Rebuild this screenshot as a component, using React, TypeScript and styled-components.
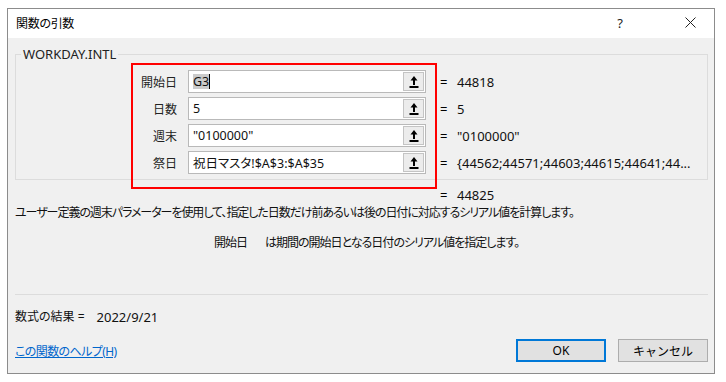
import styled, { createGlobalStyle } from 'styled-components';

const GlobalStyle = createGlobalStyle`
  body {
    margin: 0;
    background: #fff;
    font-family: 'Noto Sans', 'Noto Sans CJK JP', sans-serif;
    font-size: 12px;
    color: #000;
    font-feature-settings: 'palt';
  }
`;

const args = [
  { label: '開始日', value: 'G3', result: '44818', selected: true },
  { label: '日数', value: '5', result: '5' },
  { label: '週末', value: '"0100000"', result: '"0100000"' },
  { label: '祭日', value: '祝日マスタ!$A$3:$A$35', result: '{44562;44571;44603;44615;44641;44...' },
];

const RefIcon = () => (
  <svg width="10" height="14" viewBox="0 0 10 14">
    <path d="M5 1 L8.5 5.5 L6 5.5 L6 10 L4 10 L4 5.5 L1.5 5.5 Z" fill="#000" />
    <rect x="0.5" y="11" width="9" height="2" fill="#000" />
  </svg>
);

const CloseIcon = () => (
  <svg width="11" height="11" viewBox="0 0 11 11">
    <path d="M0.5 0.5 L10.5 10.5 M10.5 0.5 L0.5 10.5" stroke="#222" strokeWidth="1" />
  </svg>
);

const App = () => {
  return (
    <>
      <GlobalStyle />
      <Window>
        <TitleBar>
          <Title>関数の引数</Title>
          <TitleButtons>
            <TitleButton>?</TitleButton>
            <TitleButton>
              <CloseIcon />
            </TitleButton>
          </TitleButtons>
        </TitleBar>

        <Body>
          <GroupBox>
            <Legend>WORKDAY.INTL</Legend>
            {args.map((a) => (
              <ArgRow key={a.label}>
                <ArgLabel>{a.label}</ArgLabel>
                <InputBox>
                  <InputText>
                    {a.selected ? (
                      <>
                        <Selected>{a.value}</Selected>
                        <Caret />
                      </>
                    ) : (
                      a.value
                    )}
                  </InputText>
                  <RefButton>
                    <RefIcon />
                  </RefButton>
                </InputBox>
                <Equals>=</Equals>
                <ArgValue>{a.result}</ArgValue>
              </ArgRow>
            ))}
          </GroupBox>

          <ResultLine>
            <Equals>=</Equals>
            <ArgValue>44825</ArgValue>
          </ResultLine>

          <Description>
            ユーザー定義の週末パラメーターを使用して、指定した日数だけ前あるいは後の日付に対応するシリアル値を計算します。
          </Description>

          <ArgHelp>
            <span>開始日</span>
            <span>は期間の開始日となる日付のシリアル値を指定します。</span>
          </ArgHelp>

          <Separator />

          <FormulaResult>
            <span>数式の結果 =</span>
            <ResultValue>2022/9/21</ResultValue>
          </FormulaResult>

          <Footer>
            <HelpLink href="#">この関数のヘルプ(H)</HelpLink>
            <Buttons>
              <DialogButton $primary>OK</DialogButton>
              <DialogButton>キャンセル</DialogButton>
            </Buttons>
          </Footer>
        </Body>

        <Highlight />
      </Window>
    </>
  );
};

export default App;

const Window = styled.div`
  position: relative;
  box-sizing: border-box;
  width: 708px;
  height: 366px;
  margin: 8px 0 0 7px;
  border: 1px solid #8c8c8c;
  display: flex;
  flex-direction: column;
`;

const TitleBar = styled.div`
  height: 29px;
  display: flex;
  align-items: center;
  justify-content: space-between;
  padding-left: 8px;
  background: #fff;
`;

const Title = styled.span`
  font-size: 12px;
  margin-top: -2px;
  letter-spacing: -0.3px;
`;

const TitleButtons = styled.div`
  display: flex;
  gap: 22px;
  align-self: stretch;
`;

const TitleButton = styled.span`
  width: 48px;
  display: flex;
  align-items: center;
  justify-content: center;
  font-size: 13px;
  color: #222;
  margin-top: -2px;
`;

const Body = styled.div`
  flex: 1;
  background: #f0f0f0;
  padding: 0 6px 0 7px;
  display: flex;
  flex-direction: column;
`;

const GroupBox = styled.fieldset`
  margin: 8px 0 0;
  padding: 8px 0 5px;
  border: 1px solid #dcdcdc;
  display: flex;
  flex-direction: column;
  gap: 4px;
  min-width: 0;
`;

const Legend = styled.legend`
  margin-left: 5px;
  padding: 0 2px;
  line-height: 16px;
  font-size: 13px;
  color: #222;
`;

const ArgRow = styled.div`
  display: flex;
  align-items: center;
  height: 23px;
`;

const ArgLabel = styled.span`
  width: 161px;
  text-align: right;
  font-size: 12px;
  color: #222;
`;

const InputBox = styled.div`
  box-sizing: border-box;
  width: 238px;
  height: 23px;
  margin-left: 11px;
  border: 1px solid #b9b9b9;
  background: #fff;
  display: flex;
  align-items: stretch;
`;

const InputText = styled.div`
  flex: 1;
  display: flex;
  align-items: center;
  padding-left: 4px;
  font-size: 12.5px;
  color: #111;
  white-space: nowrap;
  overflow: hidden;
`;

const Selected = styled.span`
  background: #cbcbcb;
  line-height: 15px;
`;

const Caret = styled.span`
  width: 1px;
  height: 15px;
  background: #000;
`;

const RefButton = styled.div`
  box-sizing: border-box;
  width: 21px;
  margin: 1px;
  border: 1px solid #c4c4c4;
  background: #ececec;
  display: flex;
  align-items: center;
  justify-content: center;
`;

const Equals = styled.span`
  width: 17px;
  margin-left: 14px;
  font-size: 13px;
`;

const ArgValue = styled.span`
  font-size: 13px;
  color: #111;
  white-space: nowrap;
`;

const ResultLine = styled.div`
  display: flex;
  align-items: center;
  height: 16px;
  margin-top: 7px;
  padding-left: 411px;
`;

const Description = styled.div`
  margin-top: 2px;
  line-height: 16px;
  font-size: 12px;
  letter-spacing: -1.05px;
  color: #111;
  white-space: nowrap;
`;

const ArgHelp = styled.div`
  margin-top: 14px;
  padding-left: 199px;
  display: flex;
  gap: 18px;
  line-height: 16px;
  font-size: 12px;
  letter-spacing: -1px;
  color: #111;
`;

const Separator = styled.hr`
  margin: 43px 0 0;
  border: none;
  border-top: 1px solid #dcdcdc;
`;

const FormulaResult = styled.div`
  margin-top: 14px;
  line-height: 16px;
  display: flex;
  gap: 12px;
  font-size: 12px;
  color: #111;
`;

const ResultValue = styled.span`
  font-size: 13px;
`;

const Footer = styled.div`
  margin-top: 14px;
  display: flex;
  align-items: center;
  justify-content: space-between;
`;

const HelpLink = styled.a`
  font-size: 12px;
  letter-spacing: -0.6px;
  color: #0066cc;
  text-decoration: underline;
`;

const Buttons = styled.div`
  display: flex;
  gap: 12px;
`;

const DialogButton = styled.button<{ $primary?: boolean }>`
  box-sizing: border-box;
  width: 90px;
  height: 23px;
  padding: 0;
  font-family: inherit;
  font-size: 12px;
  color: #000;
  background: #e1e1e1;
  border: 1px solid ${(p) => (p.$primary ? '#0078d7' : '#adadad')};
  box-shadow: ${(p) => (p.$primary ? 'inset 0 0 0 1px #0078d7' : 'none')};
`;

const Highlight = styled.div`
  position: absolute;
  left: 123px;
  top: 54px;
  width: 306px;
  height: 126px;
  box-sizing: border-box;
  border: 2px solid #ff0000;
  pointer-events: none;
`;
